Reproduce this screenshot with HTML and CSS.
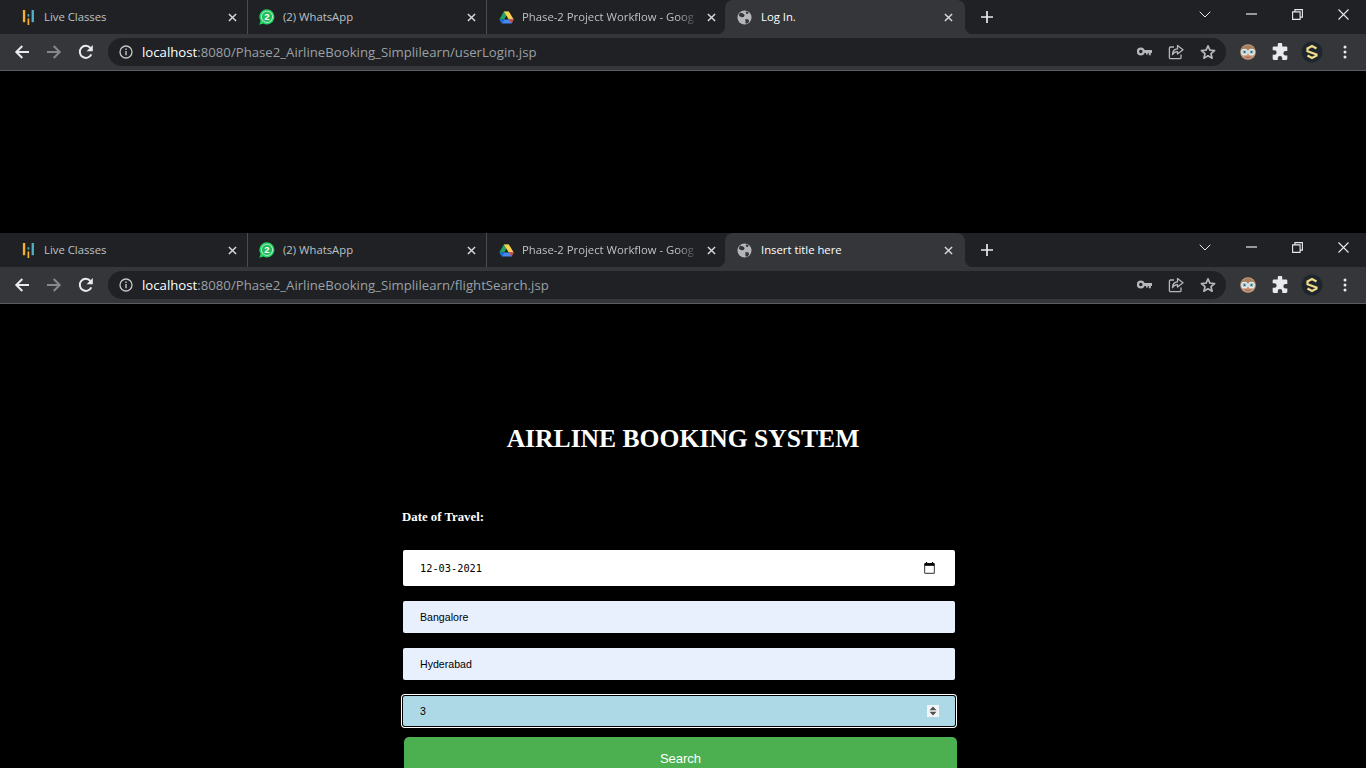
FILE: index.html
```html
<!DOCTYPE html>
<html lang="en">
<head>
    <meta charset="UTF-8">
    <title>Insert title here</title>
    <link rel="stylesheet" href="styles.css">
</head>
<body>
    <!-- shared icons -->
    <svg class="defs" width="0" height="0">
        <symbol id="i-live" viewBox="0 0 16 16">
            <rect x="2" y="0" width="2.500" height="13" fill="#f4b02e"/>
            <rect x="7" y="9" width="1.800" height="7" fill="#f4b02e"/>
            <rect x="7" y="4.500" width="1.800" height="2.500" fill="#4fb0c6"/>
            <rect x="11.300" y="0" width="2.500" height="13" fill="#4fb0c6"/>
        </symbol>
        <symbol id="i-wa" viewBox="0 0 16 16">
            <path d="M8 .2a7.600 7.600 0 0 0-6.500 11.500L.4 15.700l4-1.100A7.600 7.600 0 1 0 8 .2z" fill="#25d366"/>
            <circle cx="8" cy="7.800" r="5.900" fill="#e4f8eb"/>
            <circle cx="8" cy="7.800" r="5.200" fill="#22bb5c"/>
        </symbol>
        <symbol id="i-drive" viewBox="0 0 16 14">
            <path d="M5.200.5h5.300l-5 8.600H.3z" fill="#1fa463"/>
            <path d="M5.200.5h5.300l5.200 8.600H10.400z" fill="#ffd04b"/>
            <path d="M3 13.500h10.300l2.400-4.400H5.400z" fill="#4688f1"/>
            <path d="M3 13.500L.3 9.100h5.200z" fill="#1a73e8"/>
            <path d="M13.300 13.500l2.400-4.400h-5.200z" fill="#db4437"/>
        </symbol>
        <symbol id="i-globe" viewBox="0 0 16 16">
            <circle cx="8" cy="8" r="7.500" fill="#b4b6b9"/>
            <path d="M3 2.600l3.600 1 1.600 1.800-1 2-2.600.4L2 6zM9 9.500l3.400.6.4 2.600-2.400 2-1.400-.6zM10 1.200l2.600 1.600-1.800 1.600-1.600-1.200z" fill="#35363a"/>
        </symbol>
        <symbol id="i-x" viewBox="0 0 10 10">
            <path d="M1 1l8 8M9 1l-8 8" stroke="currentColor" stroke-width="1.600" fill="none"/>
        </symbol>
        <symbol id="i-plus" viewBox="0 0 12 12">
            <path d="M6 0v12M0 6h12" stroke="currentColor" stroke-width="1.700" fill="none"/>
        </symbol>
        <symbol id="i-chev" viewBox="0 0 12 7">
            <path d="M.7.7L6 6l5.300-5.300" stroke="currentColor" stroke-width="1" fill="none"/>
        </symbol>
        <symbol id="i-min" viewBox="0 0 11 2">
            <path d="M0 1h11" stroke="currentColor" stroke-width="1.200" fill="none"/>
        </symbol>
        <symbol id="i-restore" viewBox="0 0 11 11">
            <path d="M.6 2.900h7.500v7.500H.6zM2.900 2.900V.6h7.500v7.500H8.100" stroke="currentColor" stroke-width="1.100" fill="none"/>
        </symbol>
        <symbol id="i-close" viewBox="0 0 11 11">
            <path d="M.5.5l10 10M10.500.5l-10 10" stroke="currentColor" stroke-width="1.100" fill="none"/>
        </symbol>
        <symbol id="i-back" viewBox="0 0 16 16">
            <path d="M15 8H2.500M8.300 2L2.300 8l6 6" stroke="currentColor" stroke-width="2" fill="none"/>
        </symbol>
        <symbol id="i-fwd" viewBox="0 0 16 16">
            <path d="M1 8h12.500M7.700 2l6 6-6 6" stroke="currentColor" stroke-width="2" fill="none"/>
        </symbol>
        <symbol id="i-reload" viewBox="0 0 16 16">
            <path d="M13.300 10.300A6 6 0 1 1 12.400 4" stroke="currentColor" stroke-width="2" fill="none"/>
            <path d="M14.800 1v6.200H8.600z" fill="currentColor"/>
        </symbol>
        <symbol id="i-info" viewBox="0 0 14 14">
            <circle cx="7" cy="7" r="6" stroke="currentColor" stroke-width="1.300" fill="none"/>
            <path d="M7 6v4.200M7 3.500v1.400" stroke="currentColor" stroke-width="1.400" fill="none"/>
        </symbol>
        <symbol id="i-key" viewBox="0 0 15 9">
            <circle cx="3.800" cy="4.500" r="2.800" stroke="currentColor" stroke-width="2.200" fill="none"/>
            <path d="M7 3h8v3h-1.200v2.200h-2V6h-1v1.500H9V6H7z" fill="currentColor"/>
        </symbol>
        <symbol id="i-share" viewBox="0 0 16 16">
            <path d="M6 3H2.600A1.200 1.200 0 0 0 1.400 4.200v9.200a1.200 1.200 0 0 0 1.200 1.200h9.200a1.200 1.200 0 0 0 1.200-1.200V10.500" stroke="currentColor" stroke-width="1.300" fill="none"/>
            <path d="M9.500 1.500l5.500 4.300-5.500 4.300V7.700c-2.500 0-4 .9-5 3 0-3.500 1.800-5.600 5-5.800z" stroke="currentColor" stroke-width="1.300" fill="none" stroke-linejoin="round"/>
        </symbol>
        <symbol id="i-star" viewBox="0 0 16 16">
            <path d="M8 1.800l1.900 4.300 4.700.4-3.600 3.100 1.100 4.600L8 11.800l-4.100 2.400L5 9.600 1.400 6.500l4.700-.4z" stroke="currentColor" stroke-width="1.700" fill="none" stroke-linejoin="round"/>
        </symbol>
        <symbol id="i-avatar" viewBox="0 0 16 16">
            <circle cx="8" cy="8" r="7.800" fill="#c9a07f"/>
            <path d="M1 6a7.600 7.600 0 0 1 14 0z" fill="#a9805e"/>
            <path d="M3.500 12.500h9a6.800 6.800 0 0 1-9 0z" fill="#b06a5c"/>
            <circle cx="4.500" cy="8" r="2.800" fill="#9fc9cf" stroke="#e8f2f4" stroke-width="1.100"/>
            <circle cx="11.500" cy="8" r="2.800" fill="#9fc9cf" stroke="#e8f2f4" stroke-width="1.100"/>
            <circle cx="4.500" cy="8" r="1" fill="#4a5a66"/>
            <circle cx="11.500" cy="8" r="1" fill="#4a5a66"/>
        </symbol>
        <symbol id="i-puzzle" viewBox="0 0 16 16">
            <path d="M6 1.500a2 2 0 0 1 4 0V3h3.500a1 1 0 0 1 1 1v3H13a2 2 0 0 0 0 4h1.500v3a1 1 0 0 1-1 1H10v-1.500a2 2 0 0 0-4 0V15H2.500a1 1 0 0 1-1-1v-3.500H3a2 2 0 0 0 0-4H1.500V4a1 1 0 0 1 1-1H6z" fill="currentColor"/>
        </symbol>
        <symbol id="i-slogo" viewBox="0 0 22 22">
            <circle cx="11" cy="11" r="10.500" fill="#1c262c"/>
            <path d="M15.500 7.500L11 5 6.500 7.500v2.700L15.500 13.500v1.200L11 17l-4.500-2.500" stroke="#f2dc8c" stroke-width="2.200" fill="none"/>
        </symbol>
        <symbol id="i-dots" viewBox="0 0 4 14">
            <circle cx="2" cy="2" r="1.500" fill="currentColor"/>
            <circle cx="2" cy="7" r="1.500" fill="currentColor"/>
            <circle cx="2" cy="12" r="1.500" fill="currentColor"/>
        </symbol>
    </svg>

    <div class="browser">
        <div class="tabstrip">
            <div class="tab">
                <svg class="favicon"><use href="#i-live"/></svg>
                <span class="tab-title">Live Classes</span>
                <svg class="tab-x"><use href="#i-x"/></svg>
            </div>
            <div class="tab">
                <span class="wa-icon"><svg class="favicon"><use href="#i-wa"/></svg><b>2</b></span>
                <span class="tab-title">(2) WhatsApp</span>
                <svg class="tab-x"><use href="#i-x"/></svg>
            </div>
            <div class="tab tab-last">
                <svg class="favicon"><use href="#i-drive"/></svg>
                <span class="tab-title fade">Phase-2 Project Workflow - Goog</span>
                <svg class="tab-x"><use href="#i-x"/></svg>
            </div>
            <div class="tab tab-active">
                <svg class="favicon"><use href="#i-globe"/></svg>
                <span class="tab-title">Log In.</span>
                <svg class="tab-x"><use href="#i-x"/></svg>
            </div>
            <svg class="new-tab"><use href="#i-plus"/></svg>
            <div class="win-btns">
                <svg class="win-chev"><use href="#i-chev"/></svg>
                <svg class="win-min"><use href="#i-min"/></svg>
                <svg class="win-restore"><use href="#i-restore"/></svg>
                <svg class="win-close"><use href="#i-close"/></svg>
            </div>
        </div>
        <div class="toolbar">
            <svg class="nav nav-back"><use href="#i-back"/></svg>
            <svg class="nav nav-fwd"><use href="#i-fwd"/></svg>
            <svg class="nav nav-reload"><use href="#i-reload"/></svg>
            <div class="omnibox">
                <svg class="omni-info"><use href="#i-info"/></svg>
                <span class="url"><span class="host">localhost</span>:8080/Phase2_AirlineBooking_Simplilearn/userLogin.jsp</span>
                <svg class="omni-key"><use href="#i-key"/></svg>
                <svg class="omni-icon"><use href="#i-share"/></svg>
                <svg class="omni-icon"><use href="#i-star"/></svg>
            </div>
            <svg class="ext ext-avatar"><use href="#i-avatar"/></svg>
            <svg class="ext ext-puzzle"><use href="#i-puzzle"/></svg>
            <svg class="ext ext-s"><use href="#i-slogo"/></svg>
            <svg class="ext-dots"><use href="#i-dots"/></svg>
        </div>
    </div>

    <div class="gap"></div>

    <div class="browser">
        <div class="tabstrip">
            <div class="tab">
                <svg class="favicon"><use href="#i-live"/></svg>
                <span class="tab-title">Live Classes</span>
                <svg class="tab-x"><use href="#i-x"/></svg>
            </div>
            <div class="tab">
                <span class="wa-icon"><svg class="favicon"><use href="#i-wa"/></svg><b>2</b></span>
                <span class="tab-title">(2) WhatsApp</span>
                <svg class="tab-x"><use href="#i-x"/></svg>
            </div>
            <div class="tab tab-last">
                <svg class="favicon"><use href="#i-drive"/></svg>
                <span class="tab-title fade">Phase-2 Project Workflow - Goog</span>
                <svg class="tab-x"><use href="#i-x"/></svg>
            </div>
            <div class="tab tab-active">
                <svg class="favicon"><use href="#i-globe"/></svg>
                <span class="tab-title">Insert title here</span>
                <svg class="tab-x"><use href="#i-x"/></svg>
            </div>
            <svg class="new-tab"><use href="#i-plus"/></svg>
            <div class="win-btns">
                <svg class="win-chev"><use href="#i-chev"/></svg>
                <svg class="win-min"><use href="#i-min"/></svg>
                <svg class="win-restore"><use href="#i-restore"/></svg>
                <svg class="win-close"><use href="#i-close"/></svg>
            </div>
        </div>
        <div class="toolbar">
            <svg class="nav nav-back"><use href="#i-back"/></svg>
            <svg class="nav nav-fwd"><use href="#i-fwd"/></svg>
            <svg class="nav nav-reload"><use href="#i-reload"/></svg>
            <div class="omnibox">
                <svg class="omni-info"><use href="#i-info"/></svg>
                <span class="url"><span class="host">localhost</span>:8080/Phase2_AirlineBooking_Simplilearn/flightSearch.jsp</span>
                <svg class="omni-key"><use href="#i-key"/></svg>
                <svg class="omni-icon"><use href="#i-share"/></svg>
                <svg class="omni-icon"><use href="#i-star"/></svg>
            </div>
            <svg class="ext ext-avatar"><use href="#i-avatar"/></svg>
            <svg class="ext ext-puzzle"><use href="#i-puzzle"/></svg>
            <svg class="ext ext-s"><use href="#i-slogo"/></svg>
            <svg class="ext-dots"><use href="#i-dots"/></svg>
        </div>
    </div>

    <main class="page">
        <h1>AIRLINE BOOKING SYSTEM</h1>
        <div class="search-form">
            <p class="form-label">Date of Travel:</p>
            <div class="field field-date">
                <span>12-03-2021</span>
                <svg class="cal" viewBox="0 0 11 12">
                    <path d="M2.500 0v2M8.500 0v2" stroke="#000" stroke-width="1.200"/>
                    <rect x=".6" y="1.600" width="9.800" height="9.800" rx="1" fill="none" stroke="#555" stroke-width="1.200"/>
                    <rect x=".6" y="1.200" width="9.800" height="2.600" fill="#000"/>
                </svg>
            </div>
            <div class="field field-auto">Bangalore</div>
            <div class="field field-auto field-dest">Hyderabad</div>
            <div class="field field-number">
                <span>3</span>
                <svg class="spin" viewBox="0 0 12 12">
                    <rect width="12" height="12" fill="#f2f5f7"/>
                    <path d="M6 1.500l3.500 3.800h-7zM6 10.500L2.500 6.700h7z" fill="#505050"/>
                </svg>
            </div>
            <button class="search-btn">Search</button>
        </div>
    </main>
</body>
</html>
```

FILE: styles.css
```css
html, body { height: 100%; }
body {
    margin: 0;
    background: #000;
    overflow: hidden;
    font-family: "Liberation Sans", Arial, sans-serif;
}
.defs { position: absolute; }
svg { display: block; flex: none; }

/* browser chrome */
.browser { font-family: "Open Sans", sans-serif; }
.tabstrip {
    display: flex;
    align-items: center;
    height: 34px;
    padding-left: 9px;
    background: #202124;
}
.tab {
    position: relative;
    display: flex;
    align-items: center;
    box-sizing: border-box;
    width: 239px;
    height: 34px;
    padding: 0 3px 0 12px;
    color: #bdc1c6;
    font-size: 11.300px;
    border-right: 1px solid #4a4c50;
}
.tab-last { width: 238px; padding-right: 2px; border-right: none; }
.tab-active {
    width: 240px;
    padding-right: 5px;
    color: #fff;
    background: #35363a;
    border-right: none;
    border-radius: 8px 8px 0 0;
}
.tab-active::before, .tab-active::after {
    content: "";
    position: absolute;
    bottom: 0;
    width: 8px;
    height: 8px;
}
.tab-active::before {
    left: -8px;
    background: radial-gradient(circle at 0 0, transparent 8px, #35363a 8.500px);
}
.tab-active::after {
    right: -8px;
    background: radial-gradient(circle at 100% 0, transparent 8px, #35363a 8.500px);
}
.favicon { width: 15px; height: 15px; }
.tab-title {
    flex: 1;
    margin-left: 8px;
    padding-bottom: 2px;
    overflow: hidden;
    white-space: nowrap;
}
.tab-active .tab-title { margin-left: 9px; }
.fade {
    -webkit-mask-image: linear-gradient(to right, #000 88%, transparent 100%);
    mask-image: linear-gradient(to right, #000 88%, transparent 100%);
}
.tab-x { width: 9px; height: 9px; margin: 0 7px 0 8px; color: #d8d9db; }
.wa-icon { position: relative; display: block; margin-left: -1px; }
.wa-icon .favicon { width: 16px; height: 16px; }
.wa-icon b {
    position: absolute;
    top: 2px;
    left: 0;
    width: 16px;
    color: #fff;
    font: bold 9.500px/12px "Liberation Sans", sans-serif;
    text-align: center;
}
.new-tab { width: 12px; height: 12px; margin-left: 16px; color: #e8eaed; }
.win-btns {
    display: flex;
    align-items: center;
    margin-left: auto;
    height: 28px;
    padding-right: 17px;
    margin-top: -6px;
    color: #e8eaed;
}
.win-chev { width: 12px; height: 7px; margin-right: 35px; }
.win-min { width: 11px; height: 2px; margin-right: 35px; }
.win-restore { width: 11px; height: 11px; margin-right: 35px; }
.win-close { width: 11px; height: 11px; }

.toolbar {
    display: flex;
    align-items: center;
    box-sizing: border-box;
    height: 37px;
    padding: 0 19px 1px 14px;
    background: #35363a;
    border-bottom: 1px solid #5b5c60;
}
.nav { width: 16px; height: 16px; color: #e8eaed; }
.nav-fwd { margin-left: 16px; color: #86888c; }
.nav-reload { margin-left: 16px; }
.omnibox {
    display: flex;
    align-items: center;
    flex: 1;
    height: 28px;
    margin-left: 14px;
    padding: 0 10px 0 11px;
    background: #202124;
    border-radius: 14px;
    color: #9aa0a6;
    font-size: 13.200px;
}
.omni-info { width: 14px; height: 14px; color: #c4c6c9; }
.url { flex: 1; margin-left: 9px; white-space: nowrap; }
.host { color: #fff; }
.omni-key { width: 15px; height: 9px; color: #b4b6b9; }
.omni-icon { width: 16px; height: 16px; margin-left: 16px; color: #b4b6b9; }
.ext { color: #e8eaed; }
.ext-avatar { width: 16px; height: 16px; margin-left: 14px; }
.ext-puzzle { width: 18px; height: 18px; margin-left: 15px; }
.ext-s { width: 22px; height: 22px; margin-left: 12px; }
.ext-dots { width: 4px; height: 14px; margin-left: 20px; color: #e8eaed; }

.gap { height: 162px; }

/* page */
h1 {
    margin: 120px 0 0;
    color: #fff;
    font: bold 25.600px/30px "Liberation Serif", "Times New Roman", serif;
    text-align: center;
}
.search-form { width: 555px; margin: 0 0 0 402px; }
.form-label {
    margin: 55px 0 25px;
    color: #fff;
    font: bold 12.800px/16px "Liberation Serif", "Times New Roman", serif;
}
.field {
    display: flex;
    align-items: center;
    justify-content: space-between;
    box-sizing: border-box;
    width: 552px;
    height: 32px;
    margin: 0 0 15px 1px;
    padding: 0 16px 0 17px;
    color: #000;
    font-size: 10.600px;
    border-radius: 2px;
}
.field-date {
    height: 36px;
    padding-right: 20px;
    background: #fff;
    font-family: "DejaVu Sans Mono", monospace;
    font-size: 10.300px;
}
.field-date span { padding-bottom: 1px; }
.field-auto { background: #e8f0fe; }
.field-dest { margin-bottom: 16px; }
.field-number {
    height: 30px;
    margin-bottom: 11px;
    background: #add8e6;
    box-shadow: 0 0 0 1px #000, 0 0 0 2px #fff;
}
.cal { width: 11px; height: 12px; }
.spin { width: 12px; height: 12px; }
.search-btn {
    display: block;
    width: 553px;
    height: 42px;
    margin-left: 2px;
    padding: 0;
    color: #fff;
    background: #4caf50;
    border: none;
    border-radius: 5px;
    font: 13px "Liberation Sans", Arial, sans-serif;
}
```
